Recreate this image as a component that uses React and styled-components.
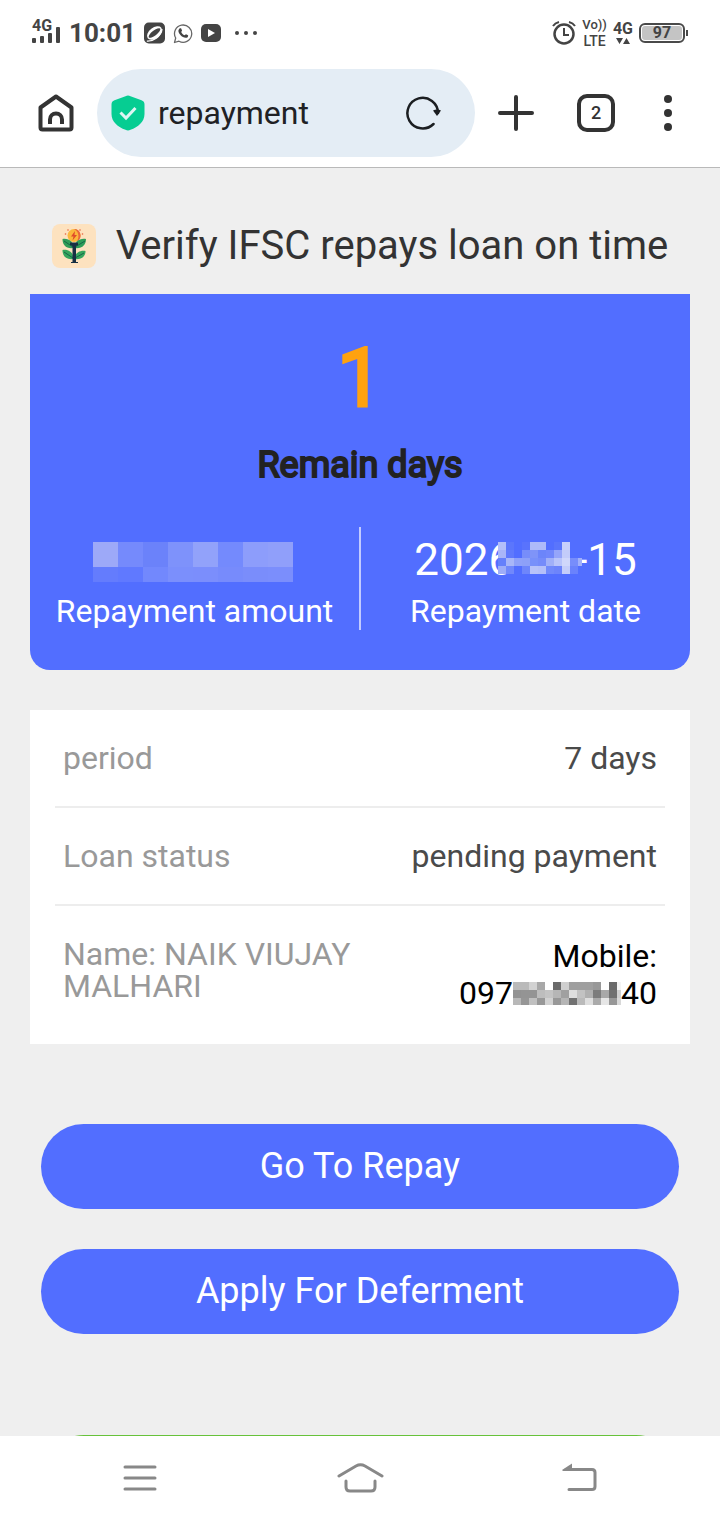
import React from "react";
import styled, { createGlobalStyle } from "styled-components";

const GlobalStyle = createGlobalStyle`
  * {
    box-sizing: border-box;
  }

  body {
    margin: 0;
    background-color: #efefef;
    font-family: Roboto, "Noto Sans", sans-serif;
  }

  button {
    margin: 0;
    padding: 0;
    border: none;
    background: none;
    font-family: inherit;
    cursor: pointer;
  }

  svg {
    display: block;
    flex-shrink: 0;
  }
`;

const Screen = styled.div`
  display: flex;
  flex-direction: column;
  height: 100vh;
`;

/* status bar */

const StatusBar = styled.div`
  display: flex;
  align-items: center;
  justify-content: space-between;
  height: 66px;
  padding: 0 32px;
  background-color: #fff;
  color: #444;
`;

const StatusGroup = styled.div`
  display: flex;
  align-items: center;
  gap: ${(props) => props.$gap || 8}px;
`;

const Clock = styled.span`
  font-size: 26px;
  font-weight: 700;
  line-height: 32px;
`;

const Stack = styled.div`
  display: flex;
  flex-direction: column;
  align-items: center;
`;

const StackText = styled.span`
  font-size: ${(props) => props.$size || 16}px;
  font-weight: ${(props) => props.$weight || 700};
  line-height: 16px;
`;

const Battery = styled.div`
  display: flex;
  align-items: center;
`;

const BatteryBody = styled.div`
  width: 46px;
  height: 20px;
  padding: 1px;
  border: 2px solid #4a4a4a;
  border-radius: 6px;
`;

const BatteryLevel = styled.div`
  height: 14px;
  border-radius: 3px;
  background-color: #c4c4c4;
  font-size: 16px;
  font-weight: 700;
  line-height: 14px;
  text-align: center;
`;

const BatteryTip = styled.div`
  width: 2px;
  height: 6px;
  margin-left: 1px;
  background-color: #4a4a4a;
`;

/* browser toolbar */

const Toolbar = styled.header`
  display: flex;
  align-items: center;
  gap: 23px;
  height: 102px;
  padding: 3px 42px 10px 38px;
  border-bottom: 1px solid #b9b9b9;
  background-color: #fff;
`;

const AddressBar = styled.div`
  display: flex;
  flex: 1;
  align-items: center;
  min-width: 0;
  height: 88px;
  padding: 0 34px 0 14px;
  border-radius: 44px;
  background-color: #e4edf5;
`;

const AddressInput = styled.input`
  flex: 1;
  min-width: 0;
  margin: 0 13px;
  padding: 0;
  border: none;
  outline: none;
  background: none;
  color: #202124;
  font-family: inherit;
  font-size: 32px;
  line-height: 40px;
`;

const ToolbarActions = styled.div`
  display: flex;
  align-items: center;
  gap: 43px;
`;

const TabsButton = styled.button`
  width: 38px;
  height: 38px;
  border: 4px solid #333;
  border-radius: 10px;
  color: #333;
  font-size: 18px;
  font-weight: 500;
  line-height: 30px;
`;

/* page */

const Page = styled.main`
  flex: 1;
  min-height: 0;
  padding: 50px 30px 0;
  overflow-y: auto;
  scrollbar-width: none;
`;

const TitleRow = styled.div`
  display: flex;
  align-items: center;
  justify-content: center;
  gap: 20px;
  height: 76px;
  padding-bottom: 20px;
`;

const Title = styled.h1`
  margin: 0;
  color: #333;
  font-size: 40px;
  font-weight: 400;
  line-height: 48px;
  white-space: nowrap;
`;

const SummaryCard = styled.section`
  padding: 40px 0;
  border-radius: 0 0 20px 20px;
  background-color: #526eff;
  color: #fff;
  text-align: center;
`;

const DaysLeft = styled.div`
  color: #ffa20f;
  font-size: 82px;
  line-height: 88px;
  -webkit-text-stroke: 3px #ffa20f;
`;

const DaysLabel = styled.div`
  margin: 22px 0 40px;
  color: #222;
  font-size: 36px;
  line-height: 43px;
  -webkit-text-stroke: 2px #222;
`;

const SummaryColumns = styled.div`
  display: flex;
  height: 103px;
`;

const SummaryColumn = styled.div`
  display: flex;
  flex: 1;
  flex-direction: column;
  align-items: center;

  & + & {
    border-left: 2px solid #c3cbff;
  }
`;

const SummaryValue = styled.div`
  display: flex;
  align-items: center;
  height: 66px;
  font-size: 44px;
`;

const AmountMask = styled.div`
  padding: 4px 3px 0 0;
`;

const SummaryLabel = styled.div`
  font-size: 32px;
  line-height: 38px;
`;

const MaskedDate = styled.span`
  position: relative;
  white-space: pre;
`;

const DateMask = styled.span`
  position: absolute;
  top: 8px;
  left: 84px;
`;

const DateGap = styled.span`
  display: inline-block;
  width: 62px;
`;

const DetailList = styled.dl`
  margin: 40px 0 80px;
  padding: 0 25px;
  background-color: #fff;
`;

const DetailRow = styled.div`
  display: flex;
  align-items: flex-start;
  justify-content: space-between;
  padding: 32px 8px;
  font-size: 32px;
  line-height: 32px;

  & + & {
    border-top: 2px solid #ededed;
  }
`;

const DetailLabel = styled.dt`
  max-width: 320px;
  color: #999;
`;

const DetailValue = styled.dd`
  margin: 0;
  color: #4a4a4a;
  text-align: right;
`;

const MobileValue = styled(DetailValue)`
  color: #000;
  line-height: 37px;
`;

const MobileNumber = styled.div`
  display: flex;
  align-items: center;
  justify-content: flex-end;
`;

const Actions = styled.div`
  display: flex;
  flex-direction: column;
  gap: 40px;
  padding: 0 11px;
`;

const ActionButton = styled.button`
  height: 85px;
  padding-bottom: 2px;
  border-radius: 43px;
  background-color: #526eff;
  color: #fff;
  font-size: 36px;
  line-height: 42px;
`;

const BottomBanner = styled.div`
  height: 86px;
  margin: 101px 11px 0;
  border-radius: 43px;
  background-color: #67c23a;
`;

const NavBar = styled.nav`
  display: grid;
  grid-template-columns: repeat(3, 1fr);
  place-items: center;
  height: 84px;
  padding: 0 30px;
  background-color: #fff;
`;

/* tile colours, row by row */
const AMOUNT_TILES = [
  ["#9da9f8", "#758afc", "#6b82fa", "#7e92fb", "#92a2fa", "#748afd", "#8d9dfb", "#909ffa"],
  ["#647cfd", "#6079ff", "#7288fd", "#7b8ffc", "#7b8efc", "#778bfc", "#7a8dfb", "#7b8efc"],
];

const DATE_TILES = [
  ["#b3bff9", "#5b76fc", "#526eff", "#5973fd", "#adbaf9", "#adbaf9", "#526eff", "#5a75fc", "#c8d0fb", "#526eff", "none"],
  ["#a8b5f8", "#5f79fc", "#526eff", "#778dfa", "#7f94f8", "#6c85fa", "#7187fb", "#95a5fa", "#c3ccfa", "#526eff", "none"],
  ["#6580fb", "#a8b6f8", "#8fa1f9", "#8da0f8", "#7890fa", "#758bfa", "#a1b0f8", "#b9c4fa", "#d0d7fb", "#778dfb", "#a1b0fa"],
  ["#9eadf8", "#7188fb", "#526eff", "#6e86fb", "#b7c2f9", "#b4bff9", "#7189fb", "#6d84fb", "#c4cdfa", "#6a82fc", "none"],
];

const MOBILE_TILES = [
  ["#bababa", "#bababa", "#d2d2d2", "#a8a8a8", "#fff", "#6b6b6b", "#cfcfcf", "#9f9f9f", "#9f9f9f", "#9f9f9f", "#989898", "#fff", "#6a6a6a", "#f4f4f4"],
  ["#929292", "#949494", "#949494", "#bdbdbd", "#c4c4c4", "#b6b6b6", "#a0a0a0", "#dedede", "#c2c2c2", "#b0b0b0", "#7c7c7c", "#a8a8a8", "#707070", "#d0d0d0"],
  ["#b8b8b8", "#969696", "#c0c0c0", "#989898", "#d2d2d2", "#989898", "#b5b5b5", "#717171", "#bababa", "#dedede", "#aaaaaa", "#e6e6e6", "#979797", "#d8d8d8"],
];

function Mosaic({ tiles, size, width, height }) {
  return (
    <svg width={width} height={height} shapeRendering="crispEdges" aria-hidden="true">
      {tiles.map((row, y) =>
        row.map((fill, x) => (
          <rect key={`${x}-${y}`} x={x * size} y={y * size} width={size} height={size} fill={fill} />
        ))
      )}
    </svg>
  );
}

function SignalIcon() {
  return (
    <svg width="29" height="36" viewBox="0 0 29 36" fill="#444">
      <text x="0" y="16" fontSize="16" fontWeight="700">4G</text>
      <rect x="0" y="23" width="4" height="5" rx="1" />
      <rect x="8" y="21" width="4" height="7" rx="1" />
      <rect x="16" y="18" width="4" height="10" rx="1" />
      <rect x="24" y="12" width="4" height="16" rx="1" />
    </svg>
  );
}

function BrowserIcon() {
  return (
    <svg width="21" height="22" viewBox="0 0 22 22">
      <rect width="22" height="22" rx="5" fill="#444" />
      <ellipse cx="11" cy="11" rx="9" ry="5.500" fill="#fff" transform="rotate(-38 11 11)" />
      <ellipse cx="11" cy="11" rx="7.500" ry="2.600" fill="#444" transform="rotate(-38 11 11)" />
      <path d="M3 19.500C9 20 18 15 19 7" fill="none" stroke="#fff" strokeWidth="1.200" />
    </svg>
  );
}

function ChatIcon() {
  return (
    <svg width="20" height="21" viewBox="0 0 20 21">
      <path
        d="M1.500 19.500L2.700 15A8.600 8.600 0 1 1 6 18.200Z"
        fill="none"
        stroke="#666"
        strokeWidth="1.300"
        strokeLinejoin="round"
      />
      <path
        d="M6.500 5.500C7 5 7.900 5 8.200 5.600L9 7.500C9.100 8 8.300 8.800 8.200 9.100C8.900 10.700 10 11.700 11.500 12.300C12 12 12.500 11.200 13 11.200L15 12.200C15.400 12.600 15 14 14.300 14.500C10.500 16.200 4.500 10.500 5.500 7Z"
        fill="#444"
      />
    </svg>
  );
}

function VideoIcon() {
  return (
    <svg width="20" height="20" viewBox="0 0 20 20">
      <rect y="1" width="20" height="18" rx="5" fill="#444" />
      <path d="M7 6L14 10L7 14Z" fill="#fff" />
    </svg>
  );
}

function MoreIcon() {
  return (
    <svg width="34" height="6" viewBox="0 0 34 6" fill="#444">
      <circle cx="8" cy="3" r="2" />
      <circle cx="17" cy="3" r="2" />
      <circle cx="26" cy="3" r="2" />
    </svg>
  );
}

function AlarmIcon() {
  return (
    <svg width="24" height="26" viewBox="0 0 24 26" fill="none" stroke="#444" strokeWidth="2.500">
      <circle cx="12" cy="14" r="9.500" />
      <path d="M12 8V15H17" strokeWidth="2" />
      <path d="M1 6Q3 3 7 2M23 6Q21 3 17 2" strokeWidth="2" />
    </svg>
  );
}

function HomeIcon() {
  return (
    <svg width="36" height="38" viewBox="0 0 36 38" fill="none" stroke="#333" strokeWidth="4" strokeLinejoin="round">
      <path d="M18 2.500L2.500 13.500V33.500Q2.500 35.500 4.500 35.500H31.500Q33.500 35.500 33.500 33.500V13.500Z" />
      <path d="M12 30V25.500A6 6 0 0 1 24 25.500V30" />
    </svg>
  );
}

function ShieldIcon() {
  return (
    <svg width="34" height="36" viewBox="0 0 34 36">
      <path
        d="M14.500 1.200Q17 0 19.500 1.200L30.500 5.200Q33.500 6.300 33.500 9.500V19C33.500 27 27 32 19.500 34.800Q17 36 14.500 34.800C7 32 .5 27 .5 19V9.500Q.5 6.300 3.500 5.200Z"
        fill="#06cd92"
      />
      <path d="M9.500 17.500L15 23L24.500 13" fill="none" stroke="#dff5f3" strokeWidth="3" />
    </svg>
  );
}

function ReloadIcon() {
  return (
    <svg width="36" height="36" viewBox="0 0 36 36">
      <path
        d="M28.500 29A15.300 15.300 0 1 1 33 18"
        fill="none"
        stroke="#1b1e21"
        strokeWidth="2.500"
        strokeLinecap="round"
      />
      <path d="M28 15.500Q32 13.500 36 15.500L32 21Z" fill="#1b1e21" />
    </svg>
  );
}

function PlusIcon() {
  return (
    <svg width="36" height="36" viewBox="0 0 36 36" stroke="#333" strokeWidth="4" strokeLinecap="round">
      <path d="M18 2V34M2 18H34" />
    </svg>
  );
}

function MenuDotsIcon() {
  return (
    <svg width="20" height="38" viewBox="0 0 20 38" fill="#333">
      <circle cx="10" cy="5" r="4" />
      <circle cx="10" cy="19" r="4" />
      <circle cx="10" cy="33" r="4" />
    </svg>
  );
}

function FlowerLogo() {
  return (
    <svg width="44" height="44" viewBox="0 0 44 44">
      <rect width="44" height="44" rx="8" fill="#fde2bf" />
      <g fill="#e8603c">
        <circle cx="13.500" cy="10" r=".8" />
        <circle cx="16" cy="6" r=".8" />
        <circle cx="28" cy="6" r=".8" />
        <circle cx="30.500" cy="10" r=".8" />
      </g>
      <circle cx="22" cy="11.500" r="6.500" fill="#fbb73c" />
      <path d="M22 5A6.500 6.500 0 0 1 25 17.300C28 12 26 7 22 5Z" fill="#e9673a" />
      <path d="M23 7L19 12.500H21.500L20.500 16.500L25 11H22.500Z" fill="#e04a2a" />
      <path d="M10.500 15C17 14 21.500 18 21.500 24C14 25 10.500 21 10.500 15Z" fill="#2f9d58" />
      <path d="M34 15C27 14 22.500 18 22.500 24C30 25 34 21 34 15Z" fill="#2f9d58" />
      <path d="M10.500 26C17 25 21.500 29 21.500 35C14 36 10.500 32 10.500 26Z" fill="#35a55e" />
      <path d="M33.500 27C27 26 22.500 30 22.500 35C30 36 33.500 32 33.500 27Z" fill="#35a55e" />
      <path d="M12 17L21 23M33 17L23 23M12 28L21 34M32 29L23 34" stroke="#176448" fill="none" />
      <path d="M18 18.500H26V21L24 22V38H26V39H19V38H20.500V22L18 21Z" fill="#173044" />
    </svg>
  );
}

function RecentsIcon() {
  return (
    <svg width="34" height="32" viewBox="0 0 34 32" stroke="#888" strokeWidth="3" strokeLinecap="round">
      <path d="M2 5H32M2 16H32M2 27H32" />
    </svg>
  );
}

function NavHomeIcon() {
  return (
    <svg width="48" height="32" viewBox="0 0 48 32" fill="none" stroke="#888" strokeWidth="3" strokeLinecap="round">
      <path d="M3 14L20 4Q24.500 1.500 29 4L46 14" />
      <path d="M10 19V25Q10 29 14 29H35Q39 29 39 25V19" />
    </svg>
  );
}

function BackIcon() {
  return (
    <svg width="36" height="32" viewBox="0 0 36 32" fill="none" stroke="#888" strokeWidth="3" strokeLinecap="round">
      <path d="M4 7.500H30Q33 7.500 33 10.500V24.500Q33 27.500 30 27.500H7" />
      <path d="M0 8L10 1.500V9H1Z" fill="#888" stroke="none" />
    </svg>
  );
}

function App() {
  return (
    <Screen>
      <GlobalStyle />
      <StatusBar>
        <StatusGroup>
          <SignalIcon />
          <Clock>10:01</Clock>
          <BrowserIcon />
          <ChatIcon />
          <VideoIcon />
          <MoreIcon />
        </StatusGroup>
        <StatusGroup $gap={6}>
          <AlarmIcon />
          <Stack>
            <StackText $size={13} $weight={500}>Vo))</StackText>
            <StackText $size={14} $weight={500}>LTE</StackText>
          </Stack>
          <Stack>
            <StackText>4G</StackText>
            <svg width="14" height="8" viewBox="0 0 14 8" fill="#444">
              <path d="M0 1H7L3.500 7ZM7 7H14L10.500 1Z" />
            </svg>
          </Stack>
          <Battery>
            <BatteryBody>
              <BatteryLevel>97</BatteryLevel>
            </BatteryBody>
            <BatteryTip />
          </Battery>
        </StatusGroup>
      </StatusBar>

      <Toolbar>
        <button type="button" aria-label="Home">
          <HomeIcon />
        </button>
        <AddressBar>
          <ShieldIcon />
          <AddressInput type="text" aria-label="Address" defaultValue="repayment" />
          <button type="button" aria-label="Reload">
            <ReloadIcon />
          </button>
        </AddressBar>
        <ToolbarActions>
          <button type="button" aria-label="New tab">
            <PlusIcon />
          </button>
          <TabsButton type="button" aria-label="2 open tabs">2</TabsButton>
          <button type="button" aria-label="More options">
            <MenuDotsIcon />
          </button>
        </ToolbarActions>
      </Toolbar>

      <Page>
        <TitleRow>
          <FlowerLogo />
          <Title>Verify IFSC repays loan on time</Title>
        </TitleRow>

        <SummaryCard>
          <DaysLeft>1</DaysLeft>
          <DaysLabel>Remain days</DaysLabel>
          <SummaryColumns>
            <SummaryColumn>
              <SummaryValue>
                <AmountMask>
                  <Mosaic tiles={AMOUNT_TILES} size={25} width={200} height={40} />
                </AmountMask>
              </SummaryValue>
              <SummaryLabel>Repayment amount</SummaryLabel>
            </SummaryColumn>
            <SummaryColumn>
              <SummaryValue>
                <MaskedDate>
                  2026
                  <DateGap />
                  -15
                  <DateMask>
                    <Mosaic tiles={DATE_TILES} size={8} width={84} height={34} />
                  </DateMask>
                </MaskedDate>
              </SummaryValue>
              <SummaryLabel>Repayment date</SummaryLabel>
            </SummaryColumn>
          </SummaryColumns>
        </SummaryCard>

        <DetailList>
          <DetailRow>
            <DetailLabel>period</DetailLabel>
            <DetailValue>7 days</DetailValue>
          </DetailRow>
          <DetailRow>
            <DetailLabel>Loan status</DetailLabel>
            <DetailValue>pending payment</DetailValue>
          </DetailRow>
          <DetailRow>
            <DetailLabel>Name: NAIK VIUJAY MALHARI</DetailLabel>
            <MobileValue>
              Mobile:
              <MobileNumber>
                097
                <Mosaic tiles={MOBILE_TILES} size={8} width={108} height={23} />
                40
              </MobileNumber>
            </MobileValue>
          </DetailRow>
        </DetailList>

        <Actions>
          <ActionButton type="button">Go To Repay</ActionButton>
          <ActionButton type="button">Apply For Deferment</ActionButton>
        </Actions>
        <BottomBanner />
      </Page>

      <NavBar>
        <button type="button" aria-label="Recent apps">
          <RecentsIcon />
        </button>
        <button type="button" aria-label="Home screen">
          <NavHomeIcon />
        </button>
        <button type="button" aria-label="Back">
          <BackIcon />
        </button>
      </NavBar>
    </Screen>
  );
}

export default App;
